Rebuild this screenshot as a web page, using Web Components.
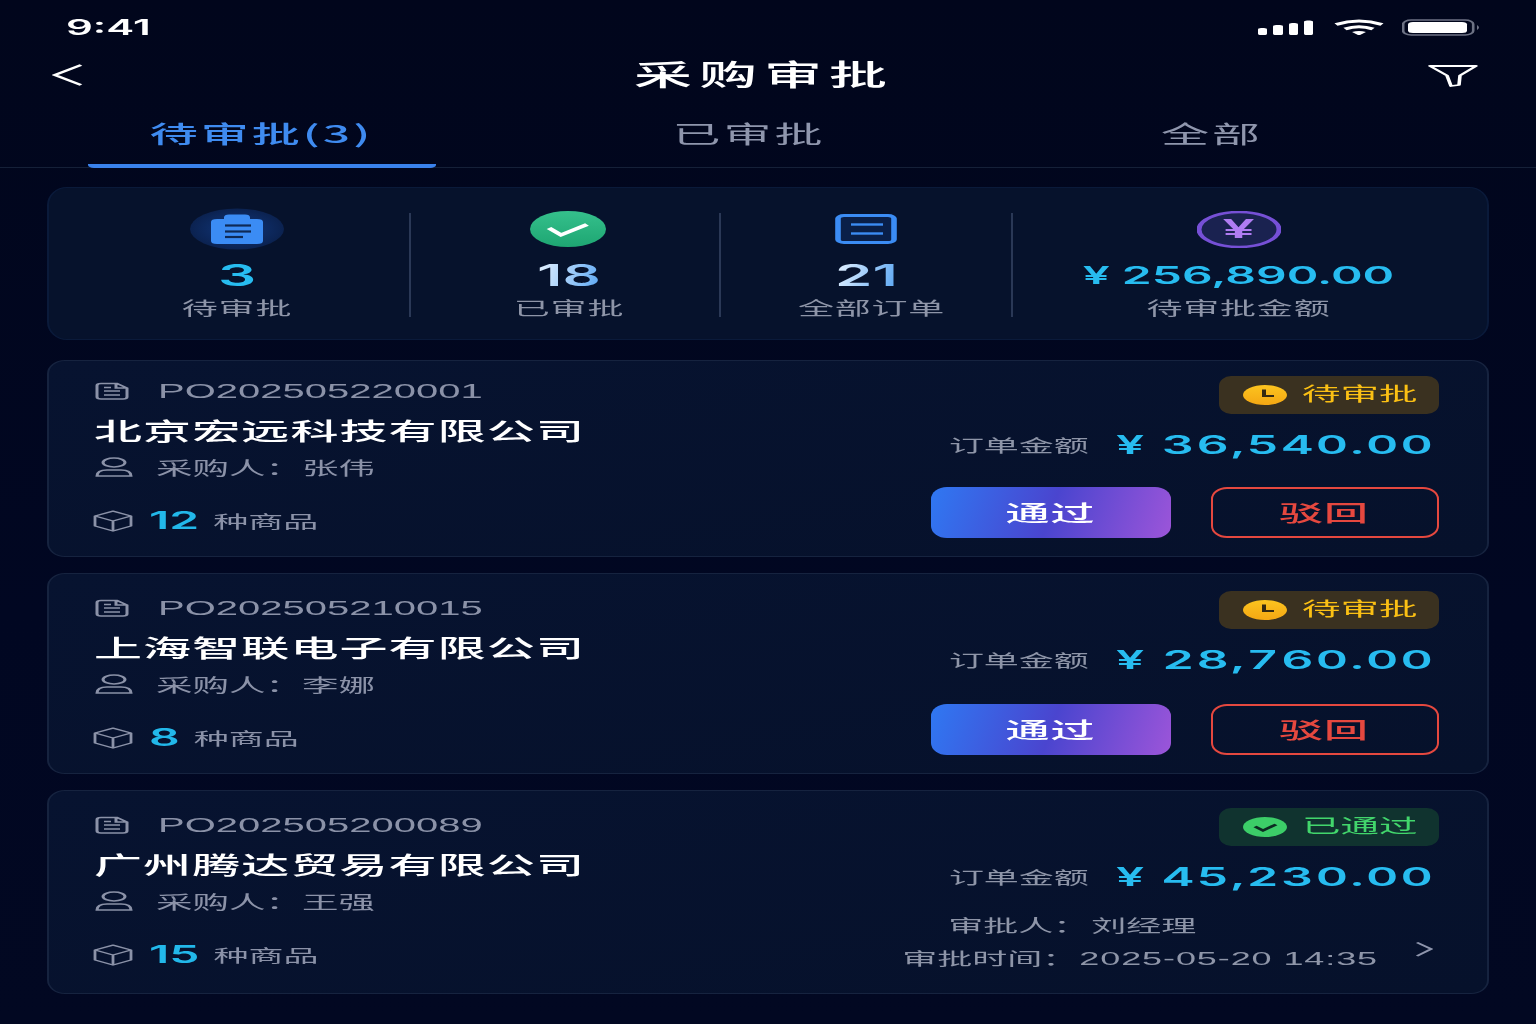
<!DOCTYPE html>
<html lang="zh-CN">
<head>
<meta charset="utf-8">
<title>采购审批</title>
<style>
html, body { margin: 0; height: 100%; overflow: hidden; background: #01061c; }
body { font-family: "Noto Sans CJK SC", "Liberation Sans", sans-serif; }
</style>
</head>
<body>
<app-screen>
  <status-bar></status-bar>
  <nav-bar>采购审批</nav-bar>
  <tab-bar></tab-bar>
  <main-list>
    <stat-panel>
      <stat-item icon="brief" value="3" label="待审批" tone="cyan" style="--shift:8px"></stat-item>
      <stat-item icon="check" value="18" label="已审批" tone="pale" style="--shift:4px"></stat-item>
      <stat-item icon="list" value="21" label="全部订单" tone="pale" style="--shift:6px;--nudge:-2.500px"></stat-item>
      <stat-item icon="yuan" value="¥ 256,890.00" label="待审批金额" tone="cyan" style="--shift:-11px"></stat-item>
    </stat-panel>
    <order-card po="PO202505220001" company="北京宏远科技有限公司" buyer="张伟" count="12" amount="¥ 36,540.00" status="pending" style="--top:20px;--rtop:15px;--bottom:21px">
      <order-actions></order-actions>
    </order-card>
    <order-card po="PO202505210015" company="上海智联电子有限公司" buyer="李娜" count="8" amount="¥ 28,760.00" status="pending" style="--top:24px;--rtop:17px;--bottom:21px">
      <order-actions style="--gap:28px"></order-actions>
    </order-card>
    <order-card po="PO202505200089" company="广州腾达贸易有限公司" buyer="王强" count="15" amount="¥ 45,230.00" status="approved" style="--top:24px;--rtop:17px;--bottom:24px">
      <approval-info who="刘经理" when="2025-05-20 14:35"></approval-info>
    </order-card>
  </main-list>
</app-screen>

<script>
const ICONS = {
  back: [16, 24, `<polyline points="14.5,2 1.5,12 14.500,22" fill="none" stroke="#fff" stroke-width="2.200"/>`],
  filter: [25, 23, `<path d="M1 2H24L16 11.500 15.500 21 11.500 22 9.500 11.500Z" fill="none" stroke="#fff" stroke-width="1.800" stroke-linejoin="round"/>`],
  signal: [28, 15, `<g fill="#fff"><rect x="0" y="8" width="4.500" height="7" rx="1.500"/><rect x="7.500" y="5" width="5" height="10" rx="1.500"/><rect x="15.500" y="3" width="4.500" height="12" rx="1.500"/><rect x="23" y="0.500" width="4.500" height="14.500" rx="1.500"/></g>`],
  wifi: [25, 16, `<g fill="none" stroke="#fff" stroke-width="3"><path d="M1 5.500Q12.500 -1.500 24 5.500"/><path d="M5.500 10Q12.500 5.500 19.500 10"/></g><path d="M9 13Q12.500 11 16 13L12.500 16.500Z" fill="#fff"/>`],
  battery: [40, 17, `<rect x="0.600" y="1" width="35" height="15" rx="4" fill="none" stroke="#6d7284" stroke-width="1.300"/><rect x="3" y="3" width="29.500" height="11" rx="2.500" fill="#fff"/><path d="M37.500 6Q39.500 8.500 37.500 11Z" fill="#6d7284"/>`],
  brief: [48, 42, `<defs><radialGradient id="b1"><stop offset="0.4" stop-color="#0f2f6b"/><stop offset="1" stop-color="#0b2250"/></radialGradient></defs>
    <ellipse cx="24" cy="21" rx="23.500" ry="20.500" fill="url(#b1)"/>
    <path d="M17.500 11V9.500Q17.500 6.500 20 6.500H28Q30.500 6.500 30.500 9.500V11H34Q37 11 37 14V33Q37 36 34 36H14Q11 36 11 33V14Q11 11 14 11Z" fill="#3b8cf4"/>
    <g stroke="#0f2a55" stroke-width="2.200"><path d="M18 17.500H31"/><path d="M18 23.500H31"/><path d="M18 29H27"/></g>`],
  check: [39, 36, `<defs><linearGradient id="g1" x1="0" y1="0" x2="0" y2="1"><stop offset="0" stop-color="#35c08c"/><stop offset="1" stop-color="#1ea672"/></linearGradient></defs>
    <ellipse cx="19.500" cy="18" rx="19" ry="18" fill="url(#g1)"/>
    <polyline points="10,17 16,24 29,13.500" fill="none" stroke="#fff" stroke-width="3"/>`],
  list: [31, 30, `<rect x="1.500" y="1.500" width="28" height="27" rx="3" fill="#0a1f48" stroke="#3b8cf4" stroke-width="2.800"/>
    <g stroke="#3b8cf4" stroke-width="2.400"><path d="M8 10.500H24"/><path d="M8 19.500H24"/></g>`],
  doc: [17, 18, `<path d="M3 1.500H11L16 6V15Q16 17 14 17H3Q1 17 1 15V3.500Q1 1.500 3 1.500ZM10.500 1.500V6H16M4.500 9H12.500M4.500 13H12.500M4.500 5.500H8" fill="none" stroke="#8b92a8" stroke-width="1.500"/>`],
  person: [19, 20, `<g fill="none" stroke="#8b92a8" stroke-width="1.500"><ellipse cx="9.500" cy="5.500" rx="5.500" ry="4.500"/><path d="M1 19Q1 13 6 13H13Q18 13 18 19Z"/></g>`],
  cube: [20, 22, `<g fill="none" stroke="#8b92a8" stroke-width="1.400" stroke-linejoin="round"><path d="M10 1.200L19 6V16L10 21L1 16V6Z"/><path d="M1 6L10 11L19 6M10 11V21"/></g>`],
  clock: [22, 20, `<defs><linearGradient id="c1" x1="0" y1="0" x2="0" y2="1"><stop offset="0" stop-color="#fcc41f"/><stop offset="1" stop-color="#f4a713"/></linearGradient></defs>
    <ellipse cx="11" cy="10" rx="11" ry="10" fill="url(#c1)"/><path d="M10.500 4.500V11H15.500" fill="none" stroke="#352a12" stroke-width="2"/>`],
  okmark: [22, 20, `<ellipse cx="11" cy="10" rx="11" ry="10" fill="#3ccd68"/><path d="M6 9.500L10 13.500 16.500 7.500" fill="none" stroke="#0c2a22" stroke-width="2.200"/>`],
  chevron: [9, 18, `<polyline points="1,1.500 8,8 1,15" fill="none" stroke="#8f96ad" stroke-width="1.600"/>`],
};

class AppIcon extends HTMLElement {
  connectedCallback() {
    if (this.shadowRoot) return;
    const [w, h, body] = ICONS[this.getAttribute("name")];
    this.attachShadow({ mode: "open" }).innerHTML = `
      <style>:host { display: block; flex: none; width: ${w}px; height: ${h}px; } svg { display: block; }</style>
      <svg width="${w}" height="${h}" viewBox="0 0 ${w} ${h}">${body}</svg>`;
  }
}
customElements.define("app-icon", AppIcon);

// the shot is stretched 2x wide, so everything is laid out at 768 and scaled
class AppScreen extends HTMLElement {
  constructor() {
    super();
    this.attachShadow({ mode: "open" }).innerHTML = `
      <style>
        :host { display: flex; flex-direction: column; width: 768px; height: 1024px; transform: scale(2, 1); transform-origin: 0 0;
          background: linear-gradient(180deg, #01061c 0%, #010722 60%, #020822 100%); color: #fff; }
      </style>
      <slot></slot>`;
  }
}
customElements.define("app-screen", AppScreen);

class StatusBar extends HTMLElement {
  constructor() {
    super();
    this.attachShadow({ mode: "open" }).innerHTML = `
      <style>
        :host { display: flex; align-items: center; height: 50px; padding: 5px 27px 0 33px; box-sizing: border-box; }
        .time { font: 600 21px/22px Inter, "Liberation Sans", sans-serif; flex: 1; }
        .icons { display: flex; align-items: center; gap: 9.500px; margin-top: -1px; }
      </style>
      <span class="time">9:41</span>
      <div class="icons"><app-icon name="signal"></app-icon><app-icon name="wifi"></app-icon><app-icon name="battery"></app-icon></div>`;
  }
}
customElements.define("status-bar", StatusBar);

class NavBar extends HTMLElement {
  constructor() {
    super();
    this.attachShadow({ mode: "open" }).innerHTML = `
      <style>
        :host { display: flex; align-items: center; justify-content: space-between; height: 50px; padding: 0 29px 0 26px; box-sizing: border-box; }
        h1 { margin: 0; padding-bottom: 4px; font: 500 29px/46px "Noto Sans CJK SC", sans-serif; letter-spacing: 3.500px; position: relative; left: 4px; }
      </style>
      <app-icon name="back"></app-icon>
      <h1><slot></slot></h1>
      <app-icon name="filter"></app-icon>`;
  }
}
customElements.define("nav-bar", NavBar);

class TabBar extends HTMLElement {
  constructor() {
    super();
    this.attachShadow({ mode: "open" }).innerHTML = `
      <style>
        :host { display: grid; grid-template-columns: 173.500px 314px 149px; height: 68px; padding-left: 44px; box-sizing: border-box;
          border-bottom: 1px solid #152038; font: 400 24px/58px "Noto Sans CJK SC", sans-serif; color: #8f96ad; }
        div { text-align: center; letter-spacing: 1.500px; height: 67px; box-sizing: border-box; padding-top: 4px; }
        .on { color: #3f8bf0; font-weight: 500; border-bottom: 4px solid #3a82ec; border-radius: 3px; height: 68px; white-space: nowrap; }
      </style>
      <div class="on">待审批(3)</div><div>已审批</div><div>全部</div>`;
  }
}
customElements.define("tab-bar", TabBar);

// half a layout px snaps to a whole one, so the half goes in the transform
class MainList extends HTMLElement {
  constructor() {
    super();
    this.attachShadow({ mode: "open" }).innerHTML = `
      <style>:host { display: flex; flex-direction: column; gap: 16px; padding: 19px 24px 0 23px; transform: translateX(0.500px); }</style>
      <slot></slot>`;
  }
}
customElements.define("main-list", MainList);

class StatPanel extends HTMLElement {
  constructor() {
    super();
    this.attachShadow({ mode: "open" }).innerHTML = `
      <style>
        :host { display: grid; grid-template-columns: 181px 155px 145.500px 1fr; height: 153px; margin-bottom: 4px; box-sizing: border-box;
          padding: 25px 0 23px; border-radius: 10px / 18px; background: #06122c; border: solid #0a1a3a; border-width: 1px 0.500px; }
      </style>
      <slot></slot>`;
  }
}
customElements.define("stat-panel", StatPanel);

class StatItem extends HTMLElement {
  connectedCallback() {
    const tone = this.getAttribute("tone");
    this.attachShadow({ mode: "open" }).innerHTML = `
      <style>
        :host { display: flex; flex-direction: column; align-items: center; box-sizing: border-box; height: 104px;
          border-right: 0.500px solid #2a3856; }
        :host(:last-child) { border-right: 0; }
        .in { display: flex; flex-direction: column; align-items: center; position: relative; left: calc(var(--shift) / 2); }
        .ic { height: 42px; display: flex; align-items: center; margin-top: -5px; position: relative; left: var(--nudge, 0); }
        .yuan { position: absolute; left: 0; right: 0; top: 0; text-align: center; font: 700 28px/42px "Liberation Sans", sans-serif; color: #b07cf2; }
        .val { font: 600 30px/34px Inter, "Liberation Sans", sans-serif; margin-top: 8px; white-space: nowrap; position: relative; left: var(--nudge, 0); }
        .cyan { color: #27bcf0; }
        .pale { background: linear-gradient(100deg, #dcedff 10%, #66adf4 90%); -webkit-background-clip: text; background-clip: text; color: transparent; }
        .wide { font-size: 24px; padding-top: 1px; height: 33px; }
        .lab { font: 400 18px/24px "Noto Sans CJK SC", sans-serif; color: #8e95a8; letter-spacing: 0.400px; margin-top: 3px; white-space: nowrap; }
      </style>
      <div class="in">
        <div class="ic" id="ic"></div>
        <div class="val ${tone}"></div>
        <div class="lab"></div>
      </div>`;
    const s = this.shadowRoot;
    const val = this.getAttribute("value");
    s.querySelector(".val").textContent = val;
    if (val.length > 4) s.querySelector(".val").classList.add("wide");
    s.querySelector(".lab").textContent = this.getAttribute("label");
    const name = this.getAttribute("icon");
    const ic = s.querySelector("#ic");
    if (name === "yuan") {
      ic.innerHTML = `<svg width="42" height="37" viewBox="0 0 42 37" style="display:block"><ellipse cx="21" cy="18.500" rx="20" ry="17.500" fill="#1a2250" stroke="#7650d6" stroke-width="2.500"/></svg><span class="yuan">¥</span>`;
    } else {
      ic.innerHTML = `<app-icon name="${name}"></app-icon>`;
    }
  }
}
customElements.define("stat-item", StatItem);

const badgeTemplate = document.createElement("template");
badgeTemplate.innerHTML = `
<style>
  :host { display: flex; align-items: center; gap: 7.500px; height: 38px; width: 109.500px; box-sizing: border-box; padding-left: 12px; border-radius: 6px / 10px;
    font: 400 19.250px/34px "Noto Sans CJK SC", sans-serif; }
  :host([status=pending]) { background: #3a3120; color: #fbc014; }
  :host([status=approved]) { background: #10332f; color: #42d66c; }
  span { padding-bottom: 4px; }
</style>
<app-icon></app-icon>
<span></span>
`;

class StatusBadge extends HTMLElement {
  connectedCallback() {
    const status = this.getAttribute("status");
    const view = badgeTemplate.content.cloneNode(true);
    view.querySelector("app-icon").setAttribute("name", status === "approved" ? "okmark" : "clock");
    view.querySelector("span").textContent = status === "approved" ? "已通过" : "待审批";
    this.attachShadow({ mode: "open" }).appendChild(view);
  }
}
customElements.define("status-badge", StatusBadge);

const cardTemplate = document.createElement("template");
cardTemplate.innerHTML = `
<style>
  :host { display: flex; justify-content: space-between; box-sizing: border-box; border: solid #16233f; border-width: 1px 0.500px;
    border-radius: 9px / 14px; background: linear-gradient(160deg, #071330, #06112b); }
  .left { padding: var(--top) 0 var(--bottom) 22.500px; }
  .row { display: flex; align-items: center; white-space: nowrap; }
  .po { height: 20px; color: #8b92a8; font: 400 20px/20px "Liberation Sans", sans-serif; gap: 14.500px; }
  .po app-icon { margin-left: 0.500px; }
  .company { margin-top: 14px; font: 500 24px/30px "Noto Sans CJK SC", sans-serif; letter-spacing: 0.550px; }
  .buyer { margin-top: 10px; height: 24px; color: #8b92a8; font: 400 18.250px/24px "Noto Sans CJK SC", sans-serif; gap: 12px; }
  .buyer b { font-weight: 400; }
  .goods { margin-top: 28px; height: 28px; color: #8b92a8; font: 400 17.500px/28px "Noto Sans CJK SC", sans-serif; margin-left: -0.500px; }
  .goods b { font: 600 24px/28px Inter, "Liberation Sans", sans-serif; color: #22b8ea; margin: 0 7px 0 8px; }
  .right { display: flex; flex-direction: column; align-items: flex-end; padding: var(--rtop) 24.500px 0 0; }
  .amount { margin-top: 15px; height: 32px; padding-right: 1.500px; gap: 13.500px; }
  .amount span { color: #8e95a8; font: 400 17.500px/32px "Noto Sans CJK SC", sans-serif; }
  .amount b { color: #27bcf0; font: 600 25px/32px Inter, "Liberation Sans", sans-serif; letter-spacing: 1.100px; font-variant-numeric: tabular-nums; }
</style>
<div class="left">
  <div class="row po"><app-icon name="doc"></app-icon><span id="po"></span></div>
  <div class="row company" id="company"></div>
  <div class="row buyer"><app-icon name="person"></app-icon><span>采购人：<b id="buyer"></b></span></div>
  <div class="row goods"><app-icon name="cube"></app-icon><b id="count"></b><span>种商品</span></div>
</div>
<div class="right">
  <status-badge></status-badge>
  <div class="row amount"><span>订单金额</span><b id="amount"></b></div>
  <slot></slot>
</div>
`;

class OrderCard extends HTMLElement {
  connectedCallback() {
    const view = cardTemplate.content.cloneNode(true);
    for (const key of ["po", "company", "buyer", "count", "amount"]) {
      view.getElementById(key).textContent = this.getAttribute(key);
    }
    view.querySelector("status-badge").setAttribute("status", this.getAttribute("status"));
    this.attachShadow({ mode: "open" }).appendChild(view);
  }
}
customElements.define("order-card", OrderCard);

class OrderActions extends HTMLElement {
  constructor() {
    super();
    this.attachShadow({ mode: "open" }).innerHTML = `
      <style>
        :host { display: flex; gap: 19.500px; margin-top: var(--gap, 26px); margin-bottom: 10px; }
        button { height: 51px; box-sizing: border-box; padding: 0 0 4px; border-radius: 8px / 12px; font: 500 22px/1 "Noto Sans CJK SC", sans-serif; letter-spacing: 0.500px; }
        .ok { width: 120.500px; border: 0; color: #fff; background: linear-gradient(100deg, #2f78f2 0%, #4a45cf 50%, #9c55d9 100%); }
        .no { width: 114px; background: transparent; color: #e5483f; border: solid #e5483f; border-width: 2px 1px; }
      </style>
      <button class="ok">通过</button><button class="no">驳回</button>`;
  }
}
customElements.define("order-actions", OrderActions);

class ApprovalInfo extends HTMLElement {
  connectedCallback() {
    this.attachShadow({ mode: "open" }).innerHTML = `
      <style>
        :host { display: flex; align-items: flex-start; margin-top: 15px; color: #8e95a8; font: 400 17.500px/33px "Noto Sans CJK SC", sans-serif; white-space: nowrap; }
        .who { padding-left: 23px; }
        .who span { margin-left: 1.500px; }
        .time { font: 400 18px/33px "Liberation Sans", sans-serif; letter-spacing: 0.450px; margin-left: 1px; }
        app-icon { margin: 33px 3px 0 18px; }
      </style>
      <div>
        <div class="who">审批人：<span>${this.getAttribute("who")}</span></div>
        <div>审批时间：<span class="time">${this.getAttribute("when")}</span></div>
      </div>
      <app-icon name="chevron"></app-icon>`;
  }
}
customElements.define("approval-info", ApprovalInfo);
</script>
</body>
</html>
